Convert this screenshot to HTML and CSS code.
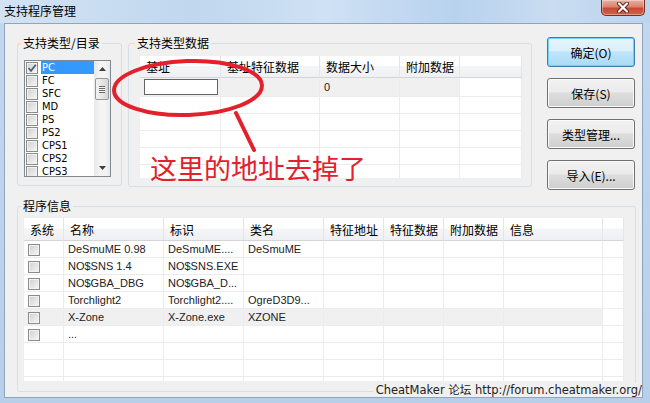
FILE: index.html
```html
<!DOCTYPE html>
<html lang="zh-CN">
<head>
  <meta charset="UTF-8">
  <title>支持程序管理</title>
  <link rel="stylesheet" href="styles.css">
</head>
<body>
<div class="window">
  <div class="titlebar">
    <span class="title">支持程序管理</span>
    <span class="close-btn">
      <svg width="14" height="11" viewBox="0 0 14 11">
        <path d="M3 1.5 L11 9.5 M11 1.5 L3 9.5" stroke="#5a2318" stroke-width="4" stroke-linecap="round"/>
        <path d="M3 1.5 L11 9.5 M11 1.5 L3 9.5" stroke="#ffffff" stroke-width="2.2" stroke-linecap="round"/>
      </svg>
    </span>
  </div>

  <div class="client">
    <div class="top-row">
      <!-- type list -->
      <fieldset class="group group-types">
        <legend>支持类型/目录</legend>
        <div class="listbox">
          <ul class="list-items">
            <li class="selected">
              <span class="cb checked">
                <svg width="10" height="10" viewBox="0 0 10 10"><path d="M1.5 5 L4 7.8 L8.8 1.8" fill="none" stroke="#4a5c8c" stroke-width="1.8"/></svg>
              </span>
              <span class="label">PC</span>
            </li>
            <li><span class="cb"></span><span class="label">FC</span></li>
            <li><span class="cb"></span><span class="label">SFC</span></li>
            <li><span class="cb"></span><span class="label">MD</span></li>
            <li><span class="cb"></span><span class="label">PS</span></li>
            <li><span class="cb"></span><span class="label">PS2</span></li>
            <li><span class="cb"></span><span class="label">CPS1</span></li>
            <li><span class="cb"></span><span class="label">CPS2</span></li>
            <li><span class="cb"></span><span class="label">CPS3</span></li>
          </ul>
          <div class="scrollbar">
            <div class="sb-arrow">
              <svg width="7" height="4" viewBox="0 0 7 4"><path d="M0 4 L3.5 0 L7 4 Z" fill="#404040"/></svg>
            </div>
            <div class="sb-track">
              <div class="sb-thumb"><span class="grip"></span></div>
            </div>
            <div class="sb-arrow">
              <svg width="7" height="4" viewBox="0 0 7 4"><path d="M0 0 L3.5 4 L7 0 Z" fill="#404040"/></svg>
            </div>
          </div>
        </div>
      </fieldset>

      <!-- type data -->
      <fieldset class="group group-data">
        <legend>支持类型数据</legend>
        <div class="grid grid-data">
          <table class="table">
            <thead>
              <tr>
                <th class="w81">基址</th>
                <th class="w99">基址特征数据</th>
                <th class="w80">数据大小</th>
                <th class="w60">附加数据</th>
                <th class="w62"></th>
              </tr>
            </thead>
            <tbody>
              <tr class="hl first">
                <td class="addr-cell"><span class="addr-input"></span></td>
                <td></td><td>0</td><td></td><td class="blank"></td>
              </tr>
              <tr><td></td><td></td><td></td><td></td><td></td></tr>
              <tr><td></td><td></td><td></td><td></td><td></td></tr>
              <tr><td></td><td></td><td></td><td></td><td></td></tr>
              <tr><td></td><td></td><td></td><td></td><td></td></tr>
              <tr><td></td><td></td><td></td><td></td><td></td></tr>
            </tbody>
          </table>
        </div>
      </fieldset>

      <div class="buttons">
        <button class="btn default">确定(O)</button>
        <button class="btn">保存(S)</button>
        <button class="btn">类型管理...</button>
        <button class="btn">导入(E)...</button>
      </div>
    </div>

    <!-- programs -->
    <fieldset class="group group-programs">
      <legend>程序信息</legend>
      <div class="grid grid-programs">
        <table class="table">
          <thead>
            <tr>
              <th class="w40">系统</th>
              <th class="w100">名称</th>
              <th class="w80">标识</th>
              <th class="w80">类名</th>
              <th class="w60">特征地址</th>
              <th class="w60">特征数据</th>
              <th class="w60">附加数据</th>
              <th class="w99">信息</th>
              <th class="w21"></th>
            </tr>
          </thead>
          <tbody>
            <tr><td><span class="cb"></span></td><td>DeSmuME 0.98</td><td>DeSmuME....</td><td>DeSmuME</td><td></td><td></td><td></td><td></td><td class="blank"></td></tr>
            <tr><td><span class="cb"></span></td><td>NO$SNS 1.4</td><td>NO$SNS.EXE</td><td></td><td></td><td></td><td></td><td></td><td class="blank"></td></tr>
            <tr><td><span class="cb"></span></td><td>NO$GBA_DBG</td><td>NO$GBA_D...</td><td></td><td></td><td></td><td></td><td></td><td class="blank"></td></tr>
            <tr><td><span class="cb"></span></td><td>Torchlight2</td><td>Torchlight2....</td><td>OgreD3D9...</td><td></td><td></td><td></td><td></td><td class="blank"></td></tr>
            <tr class="hl"><td><span class="cb"></span></td><td>X-Zone</td><td>X-Zone.exe</td><td>XZONE</td><td></td><td></td><td></td><td></td><td class="blank"></td></tr>
            <tr><td><span class="cb"></span></td><td>...</td><td></td><td></td><td></td><td></td><td></td><td></td><td class="blank"></td></tr>
            <tr><td></td><td></td><td></td><td></td><td></td><td></td><td></td><td></td><td class="blank"></td></tr>
            <tr><td></td><td></td><td></td><td></td><td></td><td></td><td></td><td></td><td class="blank"></td></tr>
            <tr><td></td><td></td><td></td><td></td><td></td><td></td><td></td><td></td><td class="blank"></td></tr>
          </tbody>
        </table>
      </div>
    </fieldset>

    <div class="footer-note">CheatMaker 论坛 http://forum.cheatmaker.org/</div>
  </div>

  <!-- red marks drawn on top of the screenshot -->
  <svg class="annotation" width="650" height="403" viewBox="0 0 650 403">
    <ellipse cx="188" cy="88" rx="74" ry="27" transform="rotate(-2 188 88)" fill="none" stroke="#e3202b" stroke-width="4"/>
    <path d="M236 113 L254 150" stroke="#e3202b" stroke-width="4" stroke-linecap="round"/>
  </svg>
  <div class="annotation-text">这里的地址去掉了</div>
</div>
</body>
</html>
```

FILE: styles.css
```css
body {
  margin: 0;
  font-family: "Noto Sans CJK SC", sans-serif;
  font-size: 12px;
  color: #000;
}

.window {
  position: relative;
  width: 650px;
  height: 403px;
  overflow: hidden;
  display: flex;
  flex-direction: column;
  background: linear-gradient(#c2d8ef, #b7cfe9);
}

.titlebar {
  height: 23px;
  flex: none;
  box-sizing: border-box;
  padding: 0 5px 0 4px;
  display: flex;
  justify-content: space-between;
  align-items: flex-start;
  background: linear-gradient(90deg, #d3e3f4, #c0d7ee 30%, #cfe1f4 50%, #b8d2ee 70%, #c9dcf1 85%, #bcd4ee);
}

.title {
  line-height: 21px;
  font-size: 12px;
  color: #000;
}

.close-btn {
  width: 44px;
  height: 16px;
  box-sizing: border-box;
  border: 1px solid #7b2b1f;
  border-top: none;
  border-radius: 0 0 5px 5px;
  background: linear-gradient(#eab0a2, #dc8371 45%, #c64a33 55%, #d0634b);
  box-shadow: inset 0 0 0 1px rgba(255,255,255,0.35);
  display: flex;
  align-items: center;
  justify-content: center;
}

.client {
  position: relative;
  flex: 1;
  margin: 0 7px 5px 4px;
  background: #f0f0f0;
  border: 1px solid #8fa4bd;
}

.top-row {
  display: flex;
  align-items: flex-start;
  padding: 12px 0 0 12px;
}

.group {
  margin: 0;
  box-sizing: border-box;
  min-width: 0;
  border: 1px solid #d5dfe5;
  border-radius: 3px;
}

.group legend {
  padding: 0 2px;
  margin-left: -3px;
  line-height: 14px;
  font-size: 12px;
}

.group-types {
  width: 105px;
  height: 150px;
  padding: 10px 0 0 6px;
}

.group-data {
  width: 404px;
  height: 151px;
  margin-left: 6px;
  padding: 6px 0 0 11px;
}

.group-data legend {
  margin-left: -5px;
}

.group-programs {
  width: 619px;
  height: 193px;
  margin: 9px 0 0 12px;
  padding: 5px 0 0 6px;
}

/* list box */
.listbox {
  width: 87px;
  height: 117px;
  box-sizing: border-box;
  border: 1px solid #828790;
  background: #fff;
  display: flex;
  overflow: hidden;
}

.list-items {
  list-style: none;
  margin: 0;
  padding: 0;
  flex: 1;
  min-width: 0;
}

.list-items li {
  height: 13px;
  display: flex;
  align-items: center;
}

.list-items .cb {
  margin-left: 1px;
}

.list-items .label {
  margin-left: 3px;
  padding: 0 1px;
  line-height: 13px;
  font-family: "DejaVu Sans Condensed", "DejaVu Sans", sans-serif;
  font-stretch: condensed;
  font-size: 11px;
  color: #000;
}

.list-items .selected .label {
  flex: 1;
  background: #3399ff;
  color: #fff;
}

.scrollbar {
  width: 16px;
  display: flex;
  flex-direction: column;
  background: linear-gradient(90deg, #e8e8e8, #f4f4f4 40%, #f4f4f4 70%, #e9e9e9);
}

.sb-arrow {
  height: 16px;
  flex: none;
  display: flex;
  align-items: center;
  justify-content: center;
}

.sb-track {
  flex: 1;
}

.sb-thumb {
  height: 22px;
  margin: 1px 1px 0 1px;
  box-sizing: border-box;
  border: 1px solid #979797;
  border-radius: 2px;
  background: linear-gradient(90deg, #f2f2f2, #e6e6e6 50%, #d6d6d6);
  display: flex;
  align-items: center;
  justify-content: center;
}

.grip {
  width: 6px;
  height: 7px;
  background: repeating-linear-gradient(#6a6a6a 0, #6a6a6a 1px, #f4f4f4 1px, #f4f4f4 2px);
}

/* check boxes */
.cb {
  display: inline-flex;
  align-items: center;
  justify-content: center;
  width: 12px;
  height: 12px;
  flex: none;
  box-sizing: border-box;
  border: 1px solid #8a8b8b;
  background: linear-gradient(135deg, #cfcfcf, #f7f7f7);
  box-shadow: inset 0 0 0 1px #f2f2f2;
}

/* grids */
.grid {
  background: #fff;
  overflow: hidden;
}

.grid-data {
  width: 382px;
  height: 122px;
}

.grid-programs {
  width: 600px;
  height: 163px;
}

.table {
  border-collapse: separate;
  border-spacing: 0;
  table-layout: fixed;
  width: 100%;
}

.table th {
  box-sizing: border-box;
  height: 23px;
  padding: 0 0 0 6px;
  text-align: left;
  font-weight: normal;
  font-size: 12px;
  white-space: nowrap;
  overflow: hidden;
  background: linear-gradient(#ffffff, #ffffff 45%, #f4f5f7 50%, #eef0f3);
  border-right: 1px solid #e2e5ea;
  border-bottom: 1px solid #d5d5d5;
}

.grid-data th {
  height: 22px;
}

.table td {
  box-sizing: border-box;
  height: 17px;
  padding: 0 4px;
  line-height: 16px;
  font-family: "Liberation Sans", sans-serif;
  font-size: 11px;
  color: #222;
  white-space: nowrap;
  overflow: hidden;
  border-right: 1px solid #ececec;
  border-bottom: 1px solid #ececec;
}

.table td .cb {
  display: flex;
  margin-top: 1px;
}

.table tr.first td {
  height: 19px;
}

.table tr.hl td {
  background: #f0f0f0;
}

.table tr.hl td.blank {
  background: #fff;
}

.addr-cell {
  padding-left: 5px;
}

.addr-input {
  display: block;
  width: 74px;
  height: 16px;
  box-sizing: border-box;
  border: 1px solid #646464;
  background: #fff;
}

.w21 { width: 21px; }
.w40 { width: 40px; }
.w60 { width: 60px; }
.w62 { width: 62px; }
.w80 { width: 80px; }
.w81 { width: 81px; }
.w99 { width: 99px; }
.w100 { width: 100px; }

/* buttons */
.buttons {
  display: flex;
  flex-direction: column;
  gap: 11px;
  margin: 1px 0 0 15px;
}

.btn {
  width: 88px;
  height: 30px;
  padding: 0;
  font-family: "Noto Sans CJK SC", sans-serif;
  font-size: 12px;
  color: #000;
  border: 1px solid #707070;
  border-radius: 3px;
  background: linear-gradient(#f2f2f2, #ebebeb 45%, #dddddd 50%, #cfcfcf);
  box-shadow: inset 0 0 0 1px #fbfbfb;
}

.btn.default {
  border-color: #3c7fb1;
  background: linear-gradient(#e8f5fc, #d9effb 45%, #bfe5fb 50%, #a9daf5);
  box-shadow: inset 0 0 0 1px #6fd3f6;
}

.footer-note {
  position: absolute;
  right: 0;
  bottom: 0;
  padding-left: 3px;
  line-height: 14px;
  font-family: "DejaVu Sans", "Noto Sans CJK SC", sans-serif;
  font-size: 11.5px;
  color: #222;
  background: #f0f0f0;
}

/* annotation overlay */
.annotation {
  position: absolute;
  left: 0;
  top: 0;
  pointer-events: none;
}

.annotation-text {
  position: absolute;
  left: 150px;
  top: 154px;
  font-family: "Noto Sans CJK SC", sans-serif;
  font-size: 27px;
  line-height: 27px;
  color: #e3202b;
  white-space: nowrap;
}
```
